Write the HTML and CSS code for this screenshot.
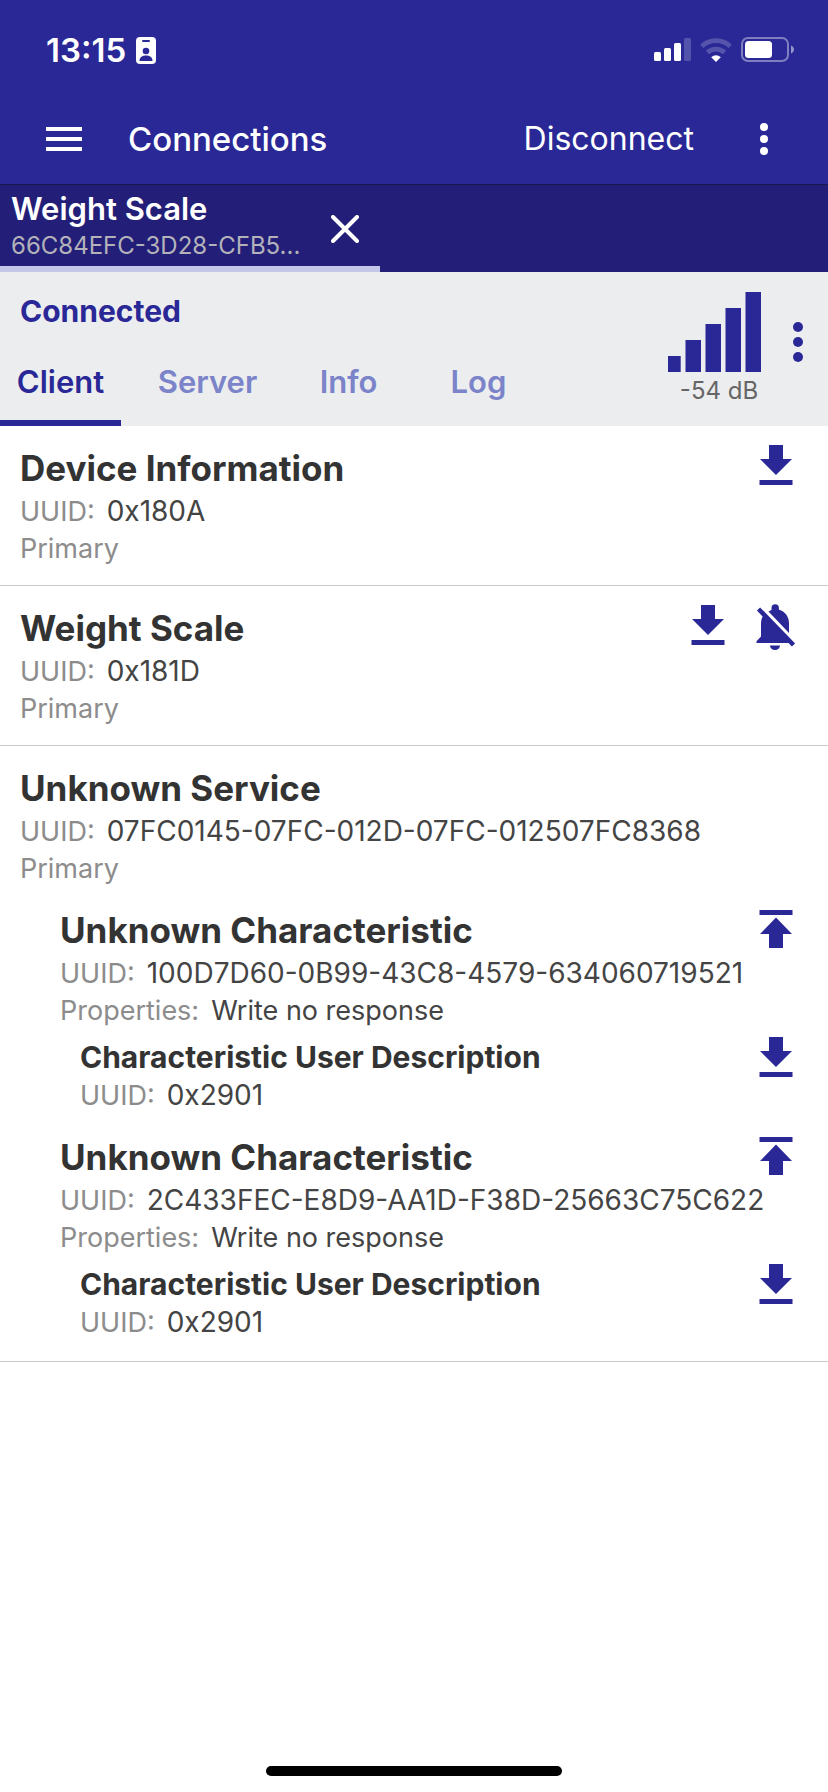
FILE: index.html
```html
<!DOCTYPE html>
<html lang="en">
<head>
<meta charset="utf-8">
<meta name="viewport" content="width=device-width, initial-scale=1">
<title>Connections</title>
<link rel="stylesheet" href="styles.css">
</head>
<body>
<svg class="defs" aria-hidden="true">
  <symbol id="download" viewBox="0 0 34 40"><path d="M10 0h14v14h9L17 30 1 14h9zM.5 35h33v5H.5z"/></symbol>
  <symbol id="upload" viewBox="0 0 34 40"><path d="M.5 2.500h33v5H.5zM17 10l16 16.500h-9V40.500H10V26.500H1z"/></symbol>
  <symbol id="bell-off" viewBox="0 0 40 46">
    <path d="M5 37V20c0-4.500 1-7 3-9.500L33.500 37v2H.5v-1.800L5 32.500zM15.500 6V4a3.700 3.700 0 0 1 7.400 0v1.500C29 7.500 33 12.500 33 19v10L12.500 7.500zM14 41.500h10a5 4.500 0 0 1-10 0z"/>
    <path d="M2.500 5 37.500 41" fill="none" stroke="currentColor" stroke-width="4.500"/>
  </symbol>
</svg>

<header class="header">
  <div class="status">
    <span class="time">13:15</span>
    <svg class="badge" width="20" height="27" viewBox="0 0 20 27" aria-hidden="true">
      <rect width="20" height="27" rx="4" fill="#fff"/>
      <rect x="6" y="3" width="8" height="2" rx="1" fill="#2a2896"/>
      <circle cx="10" cy="14" r="3.300" fill="#2a2896"/>
      <path d="M3.500 24c0-4 3-5.500 6.500-5.500s6.500 1.500 6.500 5.500z" fill="#2a2896"/>
    </svg>
    <svg class="cellular" width="37" height="24" viewBox="0 0 37 24" fill="#fff" aria-hidden="true">
      <rect y="14" width="7" height="9" rx="1.500"/><rect x="10" y="10" width="7" height="13" rx="1.500"/><rect x="20" y="5" width="7" height="18" rx="1.500"/><rect x="30" width="7" height="23" rx="1.500" opacity=".2"/>
    </svg>
    <svg class="wifi" width="32" height="24" viewBox="0 0 32 24" aria-hidden="true">
      <g fill="none" stroke="#fff" stroke-width="4.600" opacity=".2"><path d="M1.800 8.300a20.500 20.500 0 0 1 28.400 0"/><path d="M7.500 14.500a12.500 12.500 0 0 1 17 0"/></g>
      <path d="M16 24l-4.800-4.800a7.200 7.200 0 0 1 9.600 0z" fill="#fff"/>
    </svg>
    <svg width="54" height="26" viewBox="0 0 54 26" aria-hidden="true">
      <rect x="1" y="1" width="46" height="23" rx="6" fill="none" stroke="#fff" stroke-width="2" opacity=".4"/>
      <rect x="4" y="4" width="27" height="17" rx="3.500" fill="#fff"/>
      <path d="M50 8.500c4 1.500 4 6.500 0 8z" fill="#fff" opacity=".5"/>
    </svg>
  </div>
  <div class="toolbar">
    <button class="icon-btn" aria-label="Menu">
      <svg width="36" height="24" viewBox="0 0 36 24" fill="currentColor"><path d="M0 0h36v4H0zM0 10h36v4H0zM0 20h36v4H0z"/></svg>
    </button>
    <h1 class="title">Connections</h1>
    <button class="text-btn">Disconnect</button>
    <button class="icon-btn" aria-label="More options">
      <svg width="8" height="32" viewBox="0 0 8 32" fill="currentColor"><circle cx="4" cy="4" r="4"/><circle cx="4" cy="16" r="4"/><circle cx="4" cy="28" r="4"/></svg>
    </button>
  </div>
</header>

<nav class="devices" aria-label="Devices">
  <div class="device">
    <div class="device-text">
      <div class="device-name">Weight Scale</div>
      <div class="device-id">66C84EFC-3D28-CFB5...</div>
    </div>
    <button class="icon-btn close" aria-label="Close">
      <svg width="28" height="28" viewBox="0 0 28 28" fill="none" stroke="currentColor" stroke-width="4" stroke-linecap="round"><path d="M2 2l24 24M26 2L2 26"/></svg>
    </button>
  </div>
</nav>

<section class="panel">
  <div class="panel-main">
    <p class="state">Connected</p>
    <div class="tabs" role="tablist">
      <button class="tab active" role="tab" aria-selected="true">Client</button>
      <button class="tab" role="tab" aria-selected="false">Server</button>
      <button class="tab" role="tab" aria-selected="false">Info</button>
      <button class="tab" role="tab" aria-selected="false">Log</button>
    </div>
  </div>
  <div class="signal">
    <svg width="94" height="80" viewBox="0 0 94 80" fill="currentColor" aria-hidden="true"><path d="M0 64h12.700v16H0zM17.500 48H33v32H17.500zM37.500 32H53v48H37.500zM57.500 16H73v64H57.500zM77.500 0H93v80H77.500z"/></svg>
    <span class="rssi">-54 dB</span>
  </div>
  <button class="icon-btn more" aria-label="Device options">
    <svg width="10" height="40" viewBox="0 0 10 40" fill="currentColor"><circle cx="5" cy="5" r="5"/><circle cx="5" cy="20" r="5"/><circle cx="5" cy="35" r="5"/></svg>
  </button>
</section>

<main class="services">
  <article class="service">
    <div class="row">
      <h2 class="name">Device Information</h2>
      <button class="action" aria-label="Read"><svg width="34" height="40"><use href="#download"/></svg></button>
    </div>
    <p class="line"><span class="label">UUID:</span><span class="uuid">0x180A</span></p>
    <p class="line label">Primary</p>
  </article>
  <article class="service">
    <div class="row">
      <h2 class="name">Weight Scale</h2>
      <button class="action" aria-label="Read"><svg width="34" height="40"><use href="#download"/></svg></button>
      <button class="action bell" aria-label="Notifications off"><svg width="40" height="46"><use href="#bell-off"/></svg></button>
    </div>
    <p class="line"><span class="label">UUID:</span><span class="uuid">0x181D</span></p>
    <p class="line label">Primary</p>
  </article>
  <article class="service">
    <h2 class="name">Unknown Service</h2>
    <p class="line"><span class="label">UUID:</span><span class="uuid">07FC0145-07FC-012D-07FC-012507FC8368</span></p>
    <p class="line label">Primary</p>
    <div class="characteristics">
      <section class="characteristic">
        <div class="row">
          <h3 class="name">Unknown Characteristic</h3>
          <button class="action" aria-label="Write"><svg width="34" height="42" viewBox="0 -1 34 42"><use href="#upload" width="34" height="41"/></svg></button>
        </div>
        <p class="line"><span class="label">UUID:</span><span class="uuid">100D7D60-0B99-43C8-4579-634060719521</span></p>
        <p class="line"><span class="label">Properties:</span>Write no response</p>
        <div class="descriptor">
          <div class="row">
            <h4 class="name small">Characteristic User Description</h4>
            <button class="action short" aria-label="Read"><svg width="34" height="40"><use href="#download"/></svg></button>
          </div>
          <p class="line"><span class="label">UUID:</span><span class="uuid">0x2901</span></p>
        </div>
      </section>
      <section class="characteristic">
        <div class="row">
          <h3 class="name">Unknown Characteristic</h3>
          <button class="action" aria-label="Write"><svg width="34" height="42" viewBox="0 -1 34 42"><use href="#upload" width="34" height="41"/></svg></button>
        </div>
        <p class="line"><span class="label">UUID:</span><span class="uuid">2C433FEC-E8D9-AA1D-F38D-25663C75C622</span></p>
        <p class="line"><span class="label">Properties:</span>Write no response</p>
        <div class="descriptor">
          <div class="row">
            <h4 class="name small">Characteristic User Description</h4>
            <button class="action short" aria-label="Read"><svg width="34" height="40"><use href="#download"/></svg></button>
          </div>
          <p class="line"><span class="label">UUID:</span><span class="uuid">0x2901</span></p>
        </div>
      </section>
    </div>
  </article>
</main>
<footer class="home"><span class="home-bar"></span></footer>
</body>
</html>
```

FILE: styles.css
```css
* { box-sizing: border-box; margin: 0; }

body {
  min-height: 100vh;
  display: flex;
  flex-direction: column;
  background: #fff;
  color: #444;
  font-family: Inter, "Liberation Sans", sans-serif;
}

button {
  padding: 0;
  border: 0;
  background: none;
  color: inherit;
  font: inherit;
}

svg { display: block; flex: none; }
.defs { position: absolute; width: 0; height: 0; }

.header {
  background: #2a2896;
  border-bottom: 1px solid #1a174f;
  color: #fff;
}

.status {
  display: flex;
  align-items: center;
  height: 100px;
  padding: 0 33px 0 46px;
}
.time { font-size: 33px; font-weight: 600; line-height: 40px; }
.badge { margin-left: 10px; }
.cellular { margin-left: auto; }
.wifi { margin: 0 9px; }

.toolbar {
  display: flex;
  align-items: center;
  height: 84px;
  padding: 0 40px 6px;
}
.icon-btn {
  display: flex;
  align-items: center;
  justify-content: center;
  width: 48px;
  height: 48px;
}
.title {
  flex: 1;
  padding-left: 40px;
  font-size: 33px;
  font-weight: 500;
  line-height: 50px;
}
.text-btn {
  margin-right: 46px;
  font-size: 32px;
  line-height: 50px;
}

.devices { background: #231f78; color: #fff; }
.device {
  display: flex;
  align-items: center;
  justify-content: space-between;
  width: 380px;
  height: 87px;
  padding: 0 11px;
  border-bottom: 6px solid #c5c7e8;
}
.device-name { font-size: 31px; font-weight: 600; line-height: 40px; }
.device-id { color: #b3b2ba; font-size: 24px; line-height: 34px; }
.close { margin-top: 6px; }

.panel {
  display: flex;
  background: #ecedef;
  color: #2a2896;
}
.panel-main { flex: 1; }
.state {
  padding: 20px 20px 0;
  font-size: 30px;
  font-weight: 700;
  line-height: 38px;
}
.tabs {
  display: grid;
  grid-template-columns: 121px 173px 109px 151px;
  margin-top: 8px;
}
.tab {
  height: 88px;
  padding-top: 4px;
  border-bottom: 6px solid transparent;
  color: #7b83c9;
  font-size: 31px;
  font-weight: 600;
}
.tab.active { border-color: #2a2896; color: #2a2896; }
.signal {
  display: flex;
  flex-direction: column;
  align-items: center;
  padding-top: 20px;
}
.rssi {
  padding-left: 8px;
  color: #666;
  font-size: 24px;
  line-height: 38px;
}
.more { margin: 46px 6px 0 12px; }

.services { flex: 1; }
.service {
  padding: 18px 28px 17px 20px;
  border-bottom: 1px solid #c8c8c8;
}
.row { display: flex; gap: 20px; }
.name {
  flex: 1;
  color: #333;
  font-size: 35px;
  font-weight: 700;
  line-height: 48px;
}
.name.small { font-size: 30px; line-height: 38px; }
.line { height: 38px; font-size: 27px; line-height: 38px; }
.uuid { font-size: 28px; }
.label { color: #8c8c8c; }
span.label { margin-right: 12px; }
.action {
  display: flex;
  align-items: center;
  justify-content: center;
  width: 48px;
  height: 42px;
  color: #2a2896;
  fill: currentColor;
}
.action.short { height: 38px; }
.action.bell { height: 46px; }

.characteristics { padding: 0 0 2px 40px; }
.characteristic { padding-top: 18px; }
.descriptor { padding: 8px 0 1px 20px; }

.home {
  display: flex;
  justify-content: center;
  padding-bottom: 16px;
}
.home-bar {
  width: 296px;
  height: 10px;
  border-radius: 5px;
  background: #000;
}
```
